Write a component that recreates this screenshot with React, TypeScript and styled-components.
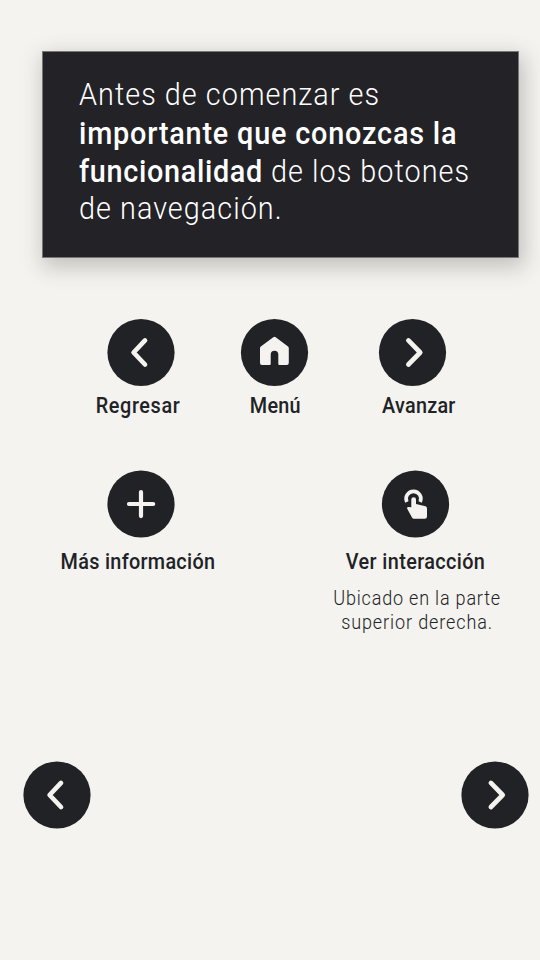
import React from "react"
import styled, { createGlobalStyle } from "styled-components"

const GlobalStyle = createGlobalStyle`
  * {
    box-sizing: border-box;
  }

  body {
    margin: 0;
    background: #f4f3ef;
    color: #212226;
    font-family: Roboto, "Liberation Sans", sans-serif;
  }
`

const Screen = styled.main`
  display: flex;
  flex-direction: column;
  height: 960px;
  padding-top: 51px;
  overflow: hidden;
`

const Intro = styled.section`
  width: 477px;
  height: 207px;
  margin-left: 42px;
  padding: 23px 0 0 36px;
  background: #232227;
  border: 1px solid #77767a;
  color: #fff;
  box-shadow: 3px 7px 20px 2px rgba(70, 60, 60, 0.28);
`

const IntroText = styled.p`
  margin: 0;
  font-size: 32px;
  font-weight: 300;
  white-space: nowrap;
  transform: scaleX(0.9);
  transform-origin: left;
`

const Line = styled.span<{ $spacing: number; $height?: number }>`
  display: block;
  letter-spacing: ${({ $spacing }) => $spacing}px;
  line-height: ${({ $height = 38 }) => $height}px;
`

const Strong = styled.strong<{ $spacing: number }>`
  font-weight: 500;
  letter-spacing: ${({ $spacing }) => $spacing}px;
`

const LegendRow = styled.div<{ $top: number; $height: number }>`
  display: flex;
  height: ${({ $height }) => $height}px;
  margin-top: ${({ $top }) => $top}px;
  padding-left: 56px;
`

const LegendItem = styled.div<{ $width: number; $indent?: number }>`
  display: flex;
  flex-direction: column;
  align-items: center;
  width: ${({ $width }) => $width}px;
  margin-left: ${({ $indent = 0 }) => $indent}px;
`

const RoundButton = styled.button`
  width: 68px;
  height: 68px;
  padding: 0;
  border: none;
  border-radius: 50%;
  background: none;
  color: #f4f3ef;
  cursor: pointer;

  svg {
    display: block;
    width: 68px;
    height: 68px;
    overflow: visible;
  }
`

const Label = styled.span<{ $gap: number; $spacing: number; $shift?: number }>`
  margin: ${({ $gap }) => $gap}px 0 0 ${({ $shift = 0 }) => $shift}px;
  font-size: 22px;
  font-weight: 500;
  line-height: 26px;
  letter-spacing: ${({ $spacing }) => $spacing}px;
  white-space: nowrap;
  transform: scaleX(0.9);
`

const Note = styled.p`
  margin: 11px 0 0 3px;
  font-size: 20px;
  font-weight: 300;
  text-align: center;
  white-space: nowrap;
  transform: scaleX(0.9);
`

const Pager = styled.nav`
  display: flex;
  justify-content: space-between;
  margin-top: 101px;
  padding: 0 11px 0 23px;
`

const strokeProps = {
  fill: "none",
  stroke: "currentColor",
  strokeWidth: 4.7,
  strokeLinecap: "round",
  strokeLinejoin: "round",
} as const

interface IconProps {
  dx?: number
  dy?: number
}

const Disc = ({
  dx = 0,
  dy = 0,
  children,
}: IconProps & { children: React.ReactNode }) => (
  <svg viewBox={`${-0.5 - dx} ${-0.5 - dy} 68 68`}>
    <circle cx="33.5" cy="33.5" r="33.6" fill="#212226" />
    {children}
  </svg>
)

const BackIcon = (props: IconProps) => (
  <Disc {...props}>
    <path {...strokeProps} d="M37.5 21.4 26.1 33.5 37.5 45.5" />
  </Disc>
)

const ForwardIcon = (props: IconProps) => (
  <Disc {...props}>
    <path {...strokeProps} d="M29.4 21.4 41.2 33.5 29.4 45.5" />
  </Disc>
)

const PlusIcon = () => (
  <Disc>
    <path
      {...strokeProps}
      strokeWidth={4.2}
      d="M33.5 21.6V45.6M21.5 33.5H45.7"
    />
  </Disc>
)

const HomeIcon = (props: IconProps) => (
  <Disc {...props}>
    <path
      fill="currentColor"
      d="M32.3 18.2q1.2-.8 2.4 0L47 27.6q.8.7.8 1.7V44q0 2-2 2H38.3q-1 0-1-1V35.6a3.8 3.8 0 0 0-7.6 0V45q0 1-1 1H21q-2 0-2-2V29.3q0-1 .8-1.7z"
    />
  </Disc>
)

const TouchIcon = (props: IconProps) => (
  <Disc {...props}>
    <path
      fill="none"
      stroke="currentColor"
      strokeWidth="3.6"
      d="M24.8 31.4A7.4 7.4 0 1 1 38.2 31.4"
    />
    <path
      fill="currentColor"
      d="M29.3 29.1a2.35 2.35 0 0 1 4.7 0V33.6L43.5 35.7q1.5.5 1.5 2.2V46q0 2.3-2.3 2.3H32q-1.4 0-2-1.2L25.2 38.2q-.5-1.7 1.1-1.8L29.3 36.8z"
    />
  </Disc>
)

const App = () => (
  <>
    <GlobalStyle />
    <Screen>
      <Intro>
        <IntroText>
          <Line $spacing={1.15}>Antes de comenzar es</Line>
          <Line $spacing={1} $height={40}>
            <Strong $spacing={0.9}>importante que conozcas la</Strong>
          </Line>
          <Line $spacing={1.15} $height={36}>
            <Strong $spacing={0.75}>funcionalidad</Strong> de los botones
          </Line>
          <Line $spacing={1.15}>de navegación.</Line>
        </IntroText>
      </Intro>

      <LegendRow $top={60} $height={101}>
        <LegendItem $width={170}>
          <RoundButton aria-label="Regresar">
            <BackIcon dy={0.5} />
          </RoundButton>
          <Label $gap={7} $spacing={0.7} $shift={-6}>
            Regresar
          </Label>
        </LegendItem>
        <LegendItem $width={97}>
          <RoundButton aria-label="Menú">
            <HomeIcon dx={-0.5} dy={0.5} />
          </RoundButton>
          <Label $gap={7} $spacing={0.3} $shift={1}>
            Menú
          </Label>
        </LegendItem>
        <LegendItem $width={178}>
          <RoundButton aria-label="Avanzar">
            <ForwardIcon dx={0.5} dy={0.5} />
          </RoundButton>
          <Label $gap={7} $spacing={0.3} $shift={13}>
            Avanzar
          </Label>
        </LegendItem>
      </LegendRow>

      <LegendRow $top={51} $height={190}>
        <LegendItem $width={170}>
          <RoundButton aria-label="Más información">
            <PlusIcon />
          </RoundButton>
          <Label $gap={11} $spacing={0.35} $shift={-6}>
            Más información
          </Label>
        </LegendItem>
        <LegendItem $width={185} $indent={97}>
          <RoundButton aria-label="Ver interacción">
            <TouchIcon dx={-0.5} />
          </RoundButton>
          <Label $gap={11} $spacing={0.45} $shift={1}>
            Ver interacción
          </Label>
          <Note>
            <Line $spacing={0.9} $height={24}>
              Ubicado en la parte
            </Line>
            <Line $spacing={1} $height={24}>
              superior derecha.
            </Line>
          </Note>
        </LegendItem>
      </LegendRow>

      <Pager>
        <RoundButton aria-label="Regresar">
          <BackIcon />
        </RoundButton>
        <RoundButton aria-label="Avanzar">
          <ForwardIcon />
        </RoundButton>
      </Pager>
    </Screen>
  </>
)

export default App
